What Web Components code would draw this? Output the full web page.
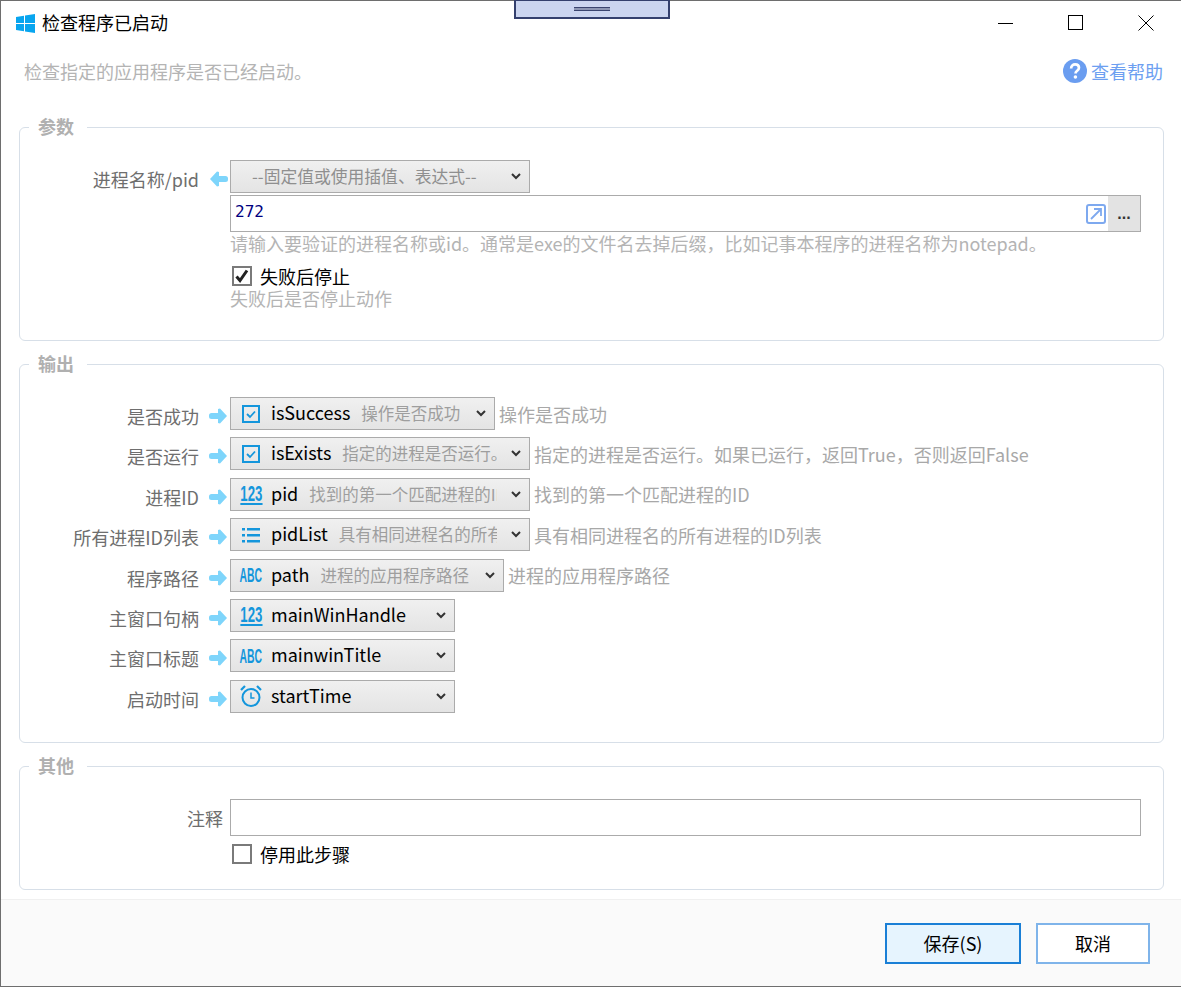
<!DOCTYPE html>
<html lang="zh">
<head>
<meta charset="utf-8">
<title>检查程序已启动</title>
<style>
    html, body { margin: 0; height: 100%; background: #fff; }
    body { font-family: "Noto Sans CJK SC", "Liberation Sans", sans-serif; font-size: 18px; overflow: hidden; }
</style>
</head>
<body>

<template id="tpl-window">
    <style>
        :host { display: flex; flex-direction: column; box-sizing: border-box; height: 987px; width: 1181px; position: relative;
            border: solid #6e6e6e; border-width: 1px 0 1px 1px; background: #fff; }
        .grip { position: absolute; left: 513px; top: -1px; width: 156px; height: 19px; box-sizing: border-box; background: #cbd5f0; border: 2px solid #34406e; border-top: 1px solid #34406e; }
        .grip i { display: block; width: 36px; height: 2px; margin: 6px auto 0; border-top: 1px solid #3a4470; border-bottom: 1px solid #3a4470; background: #8e97b5; }
        .title { display: flex; align-items: center; height: 44px; flex: none; padding-left: 15px; font-size: 18px; color: #000; }
        .title svg.logo { margin-right: 7px; }
        .title .name { flex: 1; margin-top: -2px; }
        .ctl { width: 70px; height: 44px; display: flex; align-items: center; justify-content: center; }
        .desc { display: flex; align-items: center; justify-content: space-between; height: 36px; flex: none; margin-top: 8px; padding: 0 18px 0 23px; color: #b4b4b4; }
        .help { display: flex; align-items: center; gap: 4px; color: #6d9ff1; }
        .body { flex: 1; min-height: 0; padding: 38px 17px 0 18px; display: flex; flex-direction: column; gap: 23px; }
        .foot { height: 87px; flex: none; box-sizing: border-box; border-top: 1px solid #f0f0f0; background: #fafafa; display: flex; justify-content: flex-end; align-items: center; gap: 15px; padding: 0 31px 0 0; }
    </style>
    <div class="grip"><i></i></div>
    <div class="title">
        <svg class="logo" width="19" height="19" viewBox="0 0 19 19"><path fill="#08a5ef" d="M0 3l8-1.200V9H0zM9 1.600L19 0v9H9zM0 10h8v7.200L0 16zM9 10h10v9L9 17.400z"/></svg>
        <span class="name">检查程序已启动</span>
        <span class="ctl"><svg width="16" height="16" viewBox="0 0 16 16"><path d="M0 8.500h15" stroke="#000" fill="none"/></svg></span>
        <span class="ctl"><svg width="16" height="16" viewBox="0 0 16 16"><rect x=".5" y=".5" width="14" height="14" stroke="#000" fill="none"/></svg></span>
        <span class="ctl"><svg width="16" height="16" viewBox="0 0 16 16"><path d="M.5.5l15 15M15.500.5l-15 15" stroke="#000" fill="none"/></svg></span>
    </div>
    <div class="desc">
        <span>检查指定的应用程序是否已经启动。</span>
        <span class="help">
            <svg width="24" height="24" viewBox="0 0 23 23"><circle cx="11.500" cy="11.500" r="11.500" fill="#6a9df0"/><path d="M7.800 9c0-2.500 1.800-3.800 3.800-3.800s3.700 1.200 3.700 3.300c0 2.800-3.300 2.800-3.300 5.300" fill="none" stroke="#fff" stroke-width="2.600"/><circle cx="11.900" cy="17.300" r="1.700" fill="#fff"/></svg>
            查看帮助
        </span>
    </div>
    <div class="body"><slot></slot></div>
    <div class="foot"><slot name="foot"></slot></div>
</template>

<template id="tpl-group">
    <style>
        :host { display: block; flex: none; box-sizing: border-box; position: relative; border: 1px solid #d7dfe8; border-radius: 6px; }
        .legend { position: absolute; left: 9px; top: -15px; padding: 0 13px 0 9px; background: #fff; font-size: 18px; line-height: 26px; font-weight: 700; color: #b0b0b0; }
        .rows { display: flex; flex-direction: column; }
    </style>
    <span class="legend"></span>
    <div class="rows"><slot></slot></div>
</template>

<template id="tpl-arrow">
    <style>
        :host { display: inline-flex; width: 19px; height: 18px; }
        svg { display: block; }
    </style>
    <svg width="19" height="18" viewBox="0 0 19 18"><path fill="#7ed5fb" d="M11 1.500l7 7.500-7 7.500-2-.6V12H2.500A2.500 2.500 0 0 1 0 9.500v-1A2.500 2.500 0 0 1 2.500 6H9V2.100z"/></svg>
</template>

<template id="tpl-row">
    <style>
        :host { display: grid; grid-template-columns: 179px 31px 1fr; align-items: start; }
        :host([noarrow]) { grid-template-columns: 203px 7px 1fr; }
        .label { text-align: right; color: #6e6e6e; line-height: 26px; padding-top: 6px; white-space: nowrap; }
        .arrow { display: flex; padding: 10px 0 0 10px; }
        .field { display: flex; align-items: center; gap: 4px; min-width: 0; }
        .field.stack { flex-direction: column; align-items: stretch; gap: 0; }
    </style>
    <span class="label"></span>
    <span class="arrow"><slot name="arrow"></slot></span>
    <div class="field"><slot></slot></div>
</template>

<template id="tpl-select">
    <style>
        :host { display: inline-flex; align-items: center; box-sizing: border-box; height: 33px; flex: none; overflow: hidden;
            border: 1px solid #ababab; background: linear-gradient(#f0f0f0, #e4e4e4); color: #000; white-space: nowrap; position: relative; }
        .ico { width: 26px; height: 24px; margin-left: 7px; flex: none; display: flex; align-items: center; justify-content: center; }
        .text { display: flex; align-items: center; margin-left: 7px; min-width: 0; flex: 1; overflow: hidden; line-height: 29px; }
        .val { margin-top: -2px; }
        .sub { color: #9e9e9e; font-size: 16.500px; margin-left: 11px; overflow: hidden; }
        .chev { width: 26px; padding-left: 6px; flex: none; display: flex; justify-content: center; }
        .place { color: #8f8f8f; font-size: 16.800px; margin-left: 14px; flex: 1; }
    </style>
    <span class="ico"><slot name="icon"></slot></span>
    <span class="text"><span class="val"></span><span class="sub"></span></span>
    <span class="chev"><svg width="10" height="7" viewBox="0 0 10 7"><path d="M1 1l4 4 4-4" fill="none" stroke="#333" stroke-width="2"/></svg></span>
</template>

<template id="tpl-input">
    <style>
        :host { display: flex; box-sizing: border-box; height: 37px; border: 1px solid #ababab; background: #fff; align-items: stretch; }
        .val { flex: 1; font-family: "DejaVu Sans Mono", "Liberation Mono", monospace; font-size: 16px; color: #00007f; line-height: 31px; padding-left: 4px; }
    </style>
    <span class="val"></span>
    <slot></slot>
</template>

<template id="tpl-check">
    <style>
        :host { display: flex; align-items: center; gap: 8px; color: #000; height: 26px; line-height: 22px; padding-left: 2px; }
        .box { width: 20px; height: 20px; box-sizing: border-box; border: 2px solid #7a7a7a; background: #fff; display: flex; align-items: center; justify-content: center; }
        svg { display: none; }
        :host([checked]) svg { display: block; }
    </style>
    <span class="box"><svg width="14" height="14" viewBox="0 0 14 14"><path d="M1.500 7.500l3.500 4 7-10" fill="none" stroke="#222" stroke-width="3"/></svg></span>
    <span><slot></slot></span>
</template>

<template id="tpl-button">
    <style>
        :host { display: flex; align-items: center; justify-content: center; box-sizing: border-box; height: 41px; border: 2px solid #7fb4ea; background: #fff; color: #000; width: 114px; }
        :host([primary]) { width: 136px; border-color: #1a7fd6; background: #e6f4fe; }
    </style>
    <slot></slot>
</template>

<template id="tpl-icon">
    <style>
        :host { display: block; line-height: 0; }
        .txt { display: block; color: #1496dc; font-family: "Liberation Sans", sans-serif; font-weight: 700; white-space: nowrap; text-align: center; }
        .abc { font-size: 20px; line-height: 20px; transform: scaleX(.52); }
        .num { font-size: 22px; line-height: 19px; transform: scaleX(.6); border-bottom: 2px solid #1496dc; }
    </style>
    <span class="holder"></span>
</template>

<script>
    function tpl(id, host) {
        const root = host.attachShadow({mode: 'open'});
        root.appendChild(document.getElementById(id).content.cloneNode(true));
        return root;
    }

    class AppWindow extends HTMLElement {
        constructor() { super(); tpl('tpl-window', this); }
    }

    class FormGroup extends HTMLElement {
        constructor() {
            super();
            this.root = tpl('tpl-group', this);
        }
        connectedCallback() {
            this.root.querySelector('.legend').textContent = this.getAttribute('legend');
            this.root.querySelector('.rows').style.cssText = this.getAttribute('rows-style') || '';
        }
    }

    class FlowArrow extends HTMLElement {
        constructor() { super(); tpl('tpl-arrow', this); }
        connectedCallback() {
            if (this.hasAttribute('in')) this.shadowRoot.querySelector('svg').style.transform = 'scaleX(-1)';
        }
    }

    class FormRow extends HTMLElement {
        constructor() { super(); this.root = tpl('tpl-row', this); }
        connectedCallback() {
            this.root.querySelector('.label').textContent = this.getAttribute('label');
            if (this.hasAttribute('stack')) this.root.querySelector('.field').classList.add('stack');
        }
    }

    class VarSelect extends HTMLElement {
        constructor() { super(); this.root = tpl('tpl-select', this); }
        connectedCallback() {
            const r = this.root;
            this.style.width = this.getAttribute('w') + 'px';
            r.querySelector('.val').textContent = this.getAttribute('value') || '';
            r.querySelector('.sub').textContent = this.getAttribute('sub') || '';
            if (this.hasAttribute('placeholder')) {
                r.querySelector('.ico').remove();
                r.querySelector('.text').innerHTML = '<span class="place">' + this.getAttribute('placeholder') + '</span>';
            }
        }
    }

    class ValueInput extends HTMLElement {
        constructor() { super(); tpl('tpl-input', this); }
        connectedCallback() {
            this.shadowRoot.querySelector('.val').textContent = this.getAttribute('value') || '';
        }
    }

    class CheckField extends HTMLElement {
        constructor() { super(); tpl('tpl-check', this); }
    }

    class DialogButton extends HTMLElement {
        constructor() { super(); tpl('tpl-button', this); }
    }

    class VarIcon extends HTMLElement {
        constructor() { super(); this.root = tpl('tpl-icon', this); }
        connectedCallback() {
            const kind = this.getAttribute('kind');
            const holder = this.root.querySelector('.holder');
            if (kind === 'num') holder.innerHTML = '<span class="txt num">123</span>';
            if (kind === 'abc') holder.innerHTML = '<span class="txt abc">ABC</span>';
            if (kind === 'check') holder.innerHTML = '<svg width="18" height="18" viewBox="0 0 18 18"><rect x="1" y="1" width="16" height="16" fill="none" stroke="#1496dc" stroke-width="2"/><path d="M5 9l3 3 5-5.500" fill="none" stroke="#1496dc" stroke-width="1.800"/></svg>';
            if (kind === 'list') holder.innerHTML = '<svg width="18" height="16" viewBox="0 0 18 16"><path fill="#1496dc" d="M0 1h3v2.500H0zM5 1h13v2.500H5zM0 7h3v2.500H0zM5 7h13v2.500H5zM0 13h3v2.500H0zM5 13h13v2.500H5z"/></svg>';
            if (kind === 'clock') holder.innerHTML = '<svg width="22" height="22" viewBox="0 0 22 22"><circle cx="11" cy="12.500" r="8.500" fill="none" stroke="#1496dc" stroke-width="2"/><path d="M11 7.500V13h3.500" fill="none" stroke="#1496dc" stroke-width="1.500"/><path d="M1 5l4-4M21 5l-4-4" stroke="#1496dc" stroke-width="2.200"/></svg>';
        }
    }

    customElements.define('app-window', AppWindow);
    customElements.define('form-group', FormGroup);
    customElements.define('flow-arrow', FlowArrow);
    customElements.define('form-row', FormRow);
    customElements.define('var-select', VarSelect);
    customElements.define('value-input', ValueInput);
    customElements.define('check-field', CheckField);
    customElements.define('dialog-button', DialogButton);
    customElements.define('var-icon', VarIcon);
</script>

<app-window>
    <form-group legend="参数" style="height:214px" rows-style="padding-top:32px">
        <form-row label="进程名称/pid" stack>
            <flow-arrow slot="arrow" in></flow-arrow>
            <var-select w="300" placeholder="--固定值或使用插值、表达式--"></var-select>
            <value-input value="272" style="margin:2px 22px 0 0">
                <span style="width:34px;display:flex;align-items:center;justify-content:flex-end;padding-right:2px">
                    <svg width="20" height="20" viewBox="0 0 20 20"><rect x="1" y="1" width="18" height="18" rx="2" fill="none" stroke="#7ea9ef" stroke-width="2"/><path d="M5 15L15 5M8 5h7v7" fill="none" stroke="#7ea9ef" stroke-width="1.800"/></svg>
                </span>
                <span style="width:32px;background:#e3e3e3;color:#333;text-align:center;line-height:36px;font-family:'Liberation Sans',sans-serif;font-size:16px;font-weight:700">...</span>
            </value-input>
            <span style="color:#b4b4b4;line-height:22px;white-space:nowrap">请输入要验证的进程名称或id。通常是exe的文件名去掉后缀，比如记事本程序的进程名称为notepad。</span>
            <check-field checked style="margin-top:11px;height:22px">失败后停止</check-field>
            <span style="color:#b4b4b4;line-height:22px">失败后是否停止动作</span>
        </form-row>
    </form-group>

    <form-group legend="输出" style="height:379px" rows-style="padding-top:32px;gap:7.400px">
        <form-row label="是否成功">
            <flow-arrow slot="arrow"></flow-arrow>
            <var-select w="265" value="isSuccess" sub="操作是否成功"><var-icon slot="icon" kind="check"></var-icon></var-select>
            <span style="color:#a8a8a8">操作是否成功</span>
        </form-row>
        <form-row label="是否运行">
            <flow-arrow slot="arrow"></flow-arrow>
            <var-select w="300" value="isExists" sub="指定的进程是否运行。"><var-icon slot="icon" kind="check"></var-icon></var-select>
            <span style="color:#a8a8a8">指定的进程是否运行。如果已运行，返回True，否则返回False</span>
        </form-row>
        <form-row label="进程ID">
            <flow-arrow slot="arrow"></flow-arrow>
            <var-select w="300" value="pid" sub="找到的第一个匹配进程的ID"><var-icon slot="icon" kind="num"></var-icon></var-select>
            <span style="color:#a8a8a8">找到的第一个匹配进程的ID</span>
        </form-row>
        <form-row label="所有进程ID列表">
            <flow-arrow slot="arrow"></flow-arrow>
            <var-select w="300" value="pidList" sub="具有相同进程名的所有进程"><var-icon slot="icon" kind="list"></var-icon></var-select>
            <span style="color:#a8a8a8">具有相同进程名的所有进程的ID列表</span>
        </form-row>
        <form-row label="程序路径">
            <flow-arrow slot="arrow"></flow-arrow>
            <var-select w="274" value="path" sub="进程的应用程序路径"><var-icon slot="icon" kind="abc"></var-icon></var-select>
            <span style="color:#a8a8a8">进程的应用程序路径</span>
        </form-row>
        <form-row label="主窗口句柄">
            <flow-arrow slot="arrow"></flow-arrow>
            <var-select w="225" value="mainWinHandle"><var-icon slot="icon" kind="num"></var-icon></var-select>
        </form-row>
        <form-row label="主窗口标题">
            <flow-arrow slot="arrow"></flow-arrow>
            <var-select w="225" value="mainwinTitle"><var-icon slot="icon" kind="abc"></var-icon></var-select>
        </form-row>
        <form-row label="启动时间">
            <flow-arrow slot="arrow"></flow-arrow>
            <var-select w="225" value="startTime"><var-icon slot="icon" kind="clock"></var-icon></var-select>
        </form-row>
    </form-group>

    <form-group legend="其他" style="height:124px" rows-style="padding-top:32px">
        <form-row label="注释" stack noarrow>
            <span slot="arrow"></span>
            <value-input style="margin-right:22px"></value-input>
            <check-field style="margin-top:5px">停用此步骤</check-field>
        </form-row>
    </form-group>

    <dialog-button slot="foot" primary>保存(S)</dialog-button>
    <dialog-button slot="foot">取消</dialog-button>
</app-window>
</body>
</html>
